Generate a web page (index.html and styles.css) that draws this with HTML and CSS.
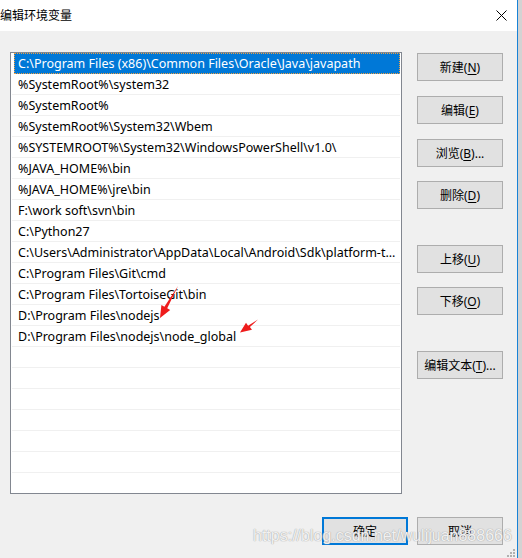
FILE: index.html
```html
<!DOCTYPE html>
<html lang="zh-CN">
<head>
<meta charset="utf-8">
<title>编辑环境变量</title>
<link rel="stylesheet" href="styles.css">
</head>
<body>
<div class="screen">
  <div class="window">
    <div class="titlebar">
      <span class="title">编辑环境变量</span>
      <svg class="close" width="11" height="11" viewBox="0 0 11 11"><path d="M0.5 0.5 L10.5 10.5 M10.5 0.5 L0.5 10.5" stroke="#000" stroke-width="1" fill="none"/></svg>
    </div>
    <div class="content">
      <div class="main">
        <div class="list">
          <div class="row selected">C:\Program Files (x86)\Common Files\Oracle\Java\javapath</div>
          <div class="row">%SystemRoot%\system32</div>
          <div class="row">%SystemRoot%</div>
          <div class="row">%SystemRoot%\System32\Wbem</div>
          <div class="row">%SYSTEMROOT%\System32\WindowsPowerShell\v1.0\</div>
          <div class="row">%JAVA_HOME%\bin</div>
          <div class="row">%JAVA_HOME%\jre\bin</div>
          <div class="row">F:\work soft\svn\bin</div>
          <div class="row">C:\Python27</div>
          <div class="row">C:\Users\Administrator\AppData\Local\Android\Sdk\platform-t...</div>
          <div class="row">C:\Program Files\Git\cmd</div>
          <div class="row">C:\Program Files\TortoiseGit\bin</div>
          <div class="row">D:\Program Files\nodejs</div>
          <div class="row">D:\Program Files\nodejs\node_global</div>
          <div class="row"></div>
          <div class="row"></div>
          <div class="row"></div>
          <div class="row"></div>
          <div class="row"></div>
          <div class="row"></div>
          <div class="row last"></div>
        </div>
        <div class="side">
          <button class="btn first">新建(<u>N</u>)</button>
          <button class="btn gap-s">编辑(<u>E</u>)</button>
          <button class="btn gap-s">浏览(<u>B</u>)...</button>
          <button class="btn gap-xs">删除(<u>D</u>)</button>
          <button class="btn gap-l">上移(<u>U</u>)</button>
          <button class="btn gap-xs">下移(<u>O</u>)</button>
          <button class="btn gap-l">编辑文本(<u>T</u>)...</button>
        </div>
      </div>
      <div class="footer">
        <button class="btn ok">确定</button>
        <button class="btn">取消</button>
      </div>
    </div>
    <svg class="arrows" width="517" height="558" viewBox="0 0 517 558">
      <polygon fill="#ee1c1c" points="160,318 170.2,309.9 167.2,308.3 178,286 164.4,306.7 161.4,305.1"/>
      <polygon fill="#ee1c1c" points="240,332.5 252,329.8 249.9,327.1 258,319.5 248.1,325.7 246,322.8"/>
    </svg>
    <div class="watermark">https://blog.csdn.net/wulijuan888666</div>
    <svg class="grip" width="8" height="8" viewBox="0 0 8 8">
      <rect x="6" y="0" width="2" height="2" fill="#b0b0b0"/>
      <rect x="3" y="3" width="2" height="2" fill="#b0b0b0"/>
      <rect x="6" y="3" width="2" height="2" fill="#b0b0b0"/>
      <rect x="0" y="6" width="2" height="2" fill="#b0b0b0"/>
      <rect x="3" y="6" width="2" height="2" fill="#b0b0b0"/>
      <rect x="6" y="6" width="2" height="2" fill="#b0b0b0"/>
    </svg>
  </div>
  <div class="behind"></div>
</div>
</body>
</html>
```
FILE: styles.css
```css
* { box-sizing: border-box; }
html, body { margin: 0; padding: 0; }
body {
  font-family: "Noto Sans", "Noto Sans CJK SC", sans-serif;
  font-size: 12px;
  color: #000;
  background: #d0d0d0;
}
.screen {
  display: flex;
  width: 522px;
  height: 558px;
  overflow: hidden;
}
.window {
  position: relative;
  width: 518px;
  height: 558px;
  background: #f0f0f0;
  border-right: 1px solid #1883d7;
  display: flex;
  flex-direction: column;
}
.behind {
  flex: 1;
  background: #d3d3d3;
}
.titlebar {
  height: 31px;
  background: #fff;
  display: flex;
  align-items: center;
  justify-content: space-between;
  padding: 0 10px 0 0;
}
.title {
  font-size: 12px;
  line-height: 16px;
}
.close { display: block; }
.content {
  padding: 21px 0 0 10px;
  display: flex;
  flex-direction: column;
}
.main {
  display: flex;
}
.list {
  width: 392px;
  height: 442px;
  border: 1px solid #828790;
  background: #fff;
  overflow: hidden;
  font-size: 12.5px;
}
.row {
  height: 21px;
  line-height: 21px;
  margin: 0 1px;
  padding-left: 6px;
  border-bottom: 1px solid #f0f0f0;
  white-space: nowrap;
  overflow: hidden;
}
.row.selected {
  margin-left: 3px;
  padding-left: 3px;
  background: #0078d7;
  color: #fff;
  border: 1px dotted #f0a040;
  line-height: 20px;
}
.side {
  margin-left: 15px;
  display: flex;
  flex-direction: column;
  width: 86px;
}
.btn {
  width: 86px;
  height: 28px;
  background: #e1e1e1;
  border: 1px solid #adadad;
  font-family: "Noto Sans", "Noto Sans CJK SC", sans-serif;
  font-size: 12px;
  color: #000;
  padding: 0;
  margin: 0;
}
.btn u { text-decoration: underline; text-underline-offset: 2px; }
.side .first { margin-top: 1px; }
.side .gap-s { margin-top: 15px; }
.side .gap-xs { margin-top: 14px; }
.side .gap-l { margin-top: 36px; }
.footer {
  display: flex;
  justify-content: flex-end;
  gap: 9px;
  margin-top: 23px;
  padding-right: 14px;
}
.btn.ok {
  border: 2px solid #0078d7;
}
.arrows {
  position: absolute;
  left: 0;
  top: 0;
  pointer-events: none;
}
.watermark {
  position: absolute;
  left: 253px;
  top: 527px;
  font-family: "Liberation Sans", sans-serif;
  font-size: 16px;
  color: rgba(255, 255, 255, 0.85);
  text-shadow: 0 0 1px #a8a8a8, 0 0 1px #a8a8a8;
  white-space: nowrap;
  pointer-events: none;
}
.grip {
  position: absolute;
  right: 2px;
  bottom: 1px;
}
```
